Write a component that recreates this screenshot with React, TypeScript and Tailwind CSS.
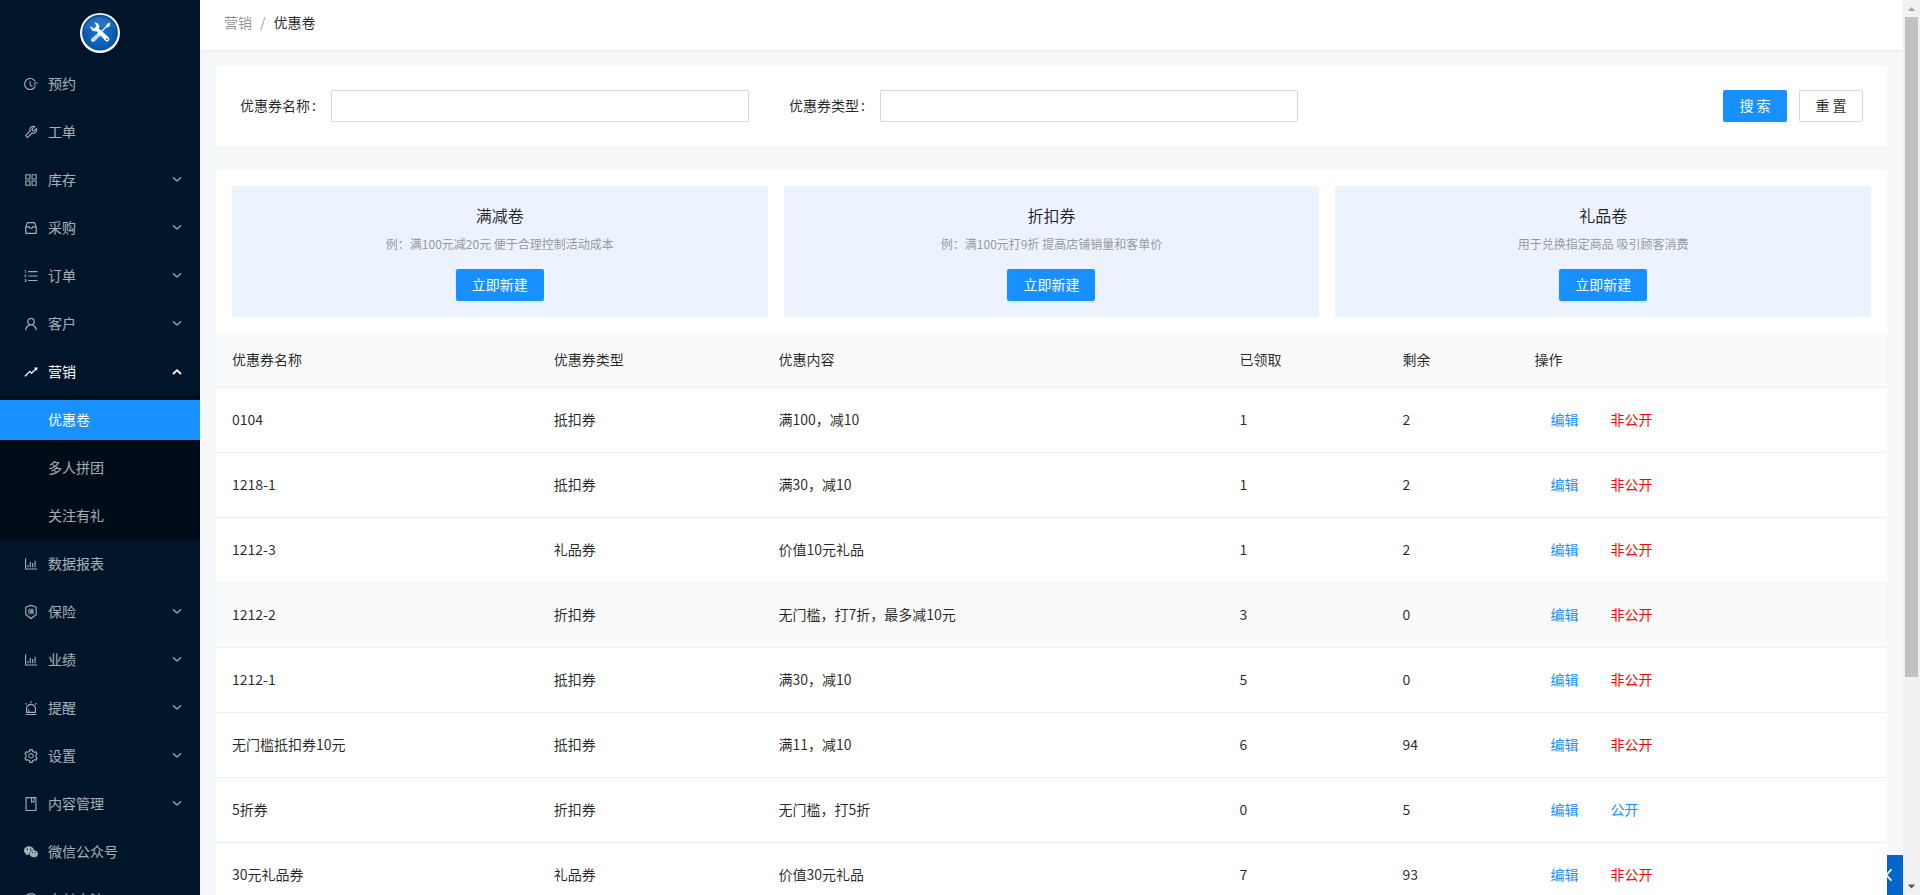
import React from "react";
import type { IconType } from "react-icons";
import {
  AiFillWechat,
  AiOutlineAlert,
  AiOutlineAppstore,
  AiOutlineBarChart,
  AiOutlineBook,
  AiOutlineFieldTime,
  AiOutlineInbox,
  AiOutlineInsurance,
  AiOutlineOrderedList,
  AiOutlinePayCircle,
  AiOutlineRise,
  AiOutlineSetting,
  AiOutlineTool,
  AiOutlineUser,
} from "react-icons/ai";

interface MenuEntry {
  label: string;
  icon: IconType;
  expandable?: boolean;
  children?: string[];
}

const menu: MenuEntry[] = [
  { label: "预约", icon: AiOutlineFieldTime },
  { label: "工单", icon: AiOutlineTool },
  { label: "库存", icon: AiOutlineAppstore, expandable: true },
  { label: "采购", icon: AiOutlineInbox, expandable: true },
  { label: "订单", icon: AiOutlineOrderedList, expandable: true },
  { label: "客户", icon: AiOutlineUser, expandable: true },
  { label: "营销", icon: AiOutlineRise, expandable: true, children: ["优惠卷", "多人拼团", "关注有礼"] },
  { label: "数据报表", icon: AiOutlineBarChart },
  { label: "保险", icon: AiOutlineInsurance, expandable: true },
  { label: "业绩", icon: AiOutlineBarChart, expandable: true },
  { label: "提醒", icon: AiOutlineAlert, expandable: true },
  { label: "设置", icon: AiOutlineSetting, expandable: true },
  { label: "内容管理", icon: AiOutlineBook, expandable: true },
  { label: "微信公众号", icon: AiFillWechat },
  { label: "支付方法", icon: AiOutlinePayCircle },
];

const promos = [
  { title: "满减卷", desc: "例：满100元减20元 便于合理控制活动成本" },
  { title: "折扣券", desc: "例：满100元打9折 提高店铺销量和客单价" },
  { title: "礼品卷", desc: "用于兑换指定商品 吸引顾客消费" },
];

const columns = [
  { title: "优惠券名称", width: "w-[19.25%]" },
  { title: "优惠券类型", width: "w-[13.45%]" },
  { title: "优惠内容", width: "w-[27.6%]" },
  { title: "已领取", width: "w-[9.75%]" },
  { title: "剩余", width: "w-[7.9%]" },
  { title: "操作", width: "" },
];

interface Coupon {
  name: string;
  type: string;
  content: string;
  taken: number;
  left: number;
  open?: boolean;
  active?: boolean;
}

const coupons: Coupon[] = [
  { name: "0104", type: "抵扣券", content: "满100，减10", taken: 1, left: 2 },
  { name: "1218-1", type: "抵扣券", content: "满30，减10", taken: 1, left: 2 },
  { name: "1212-3", type: "礼品券", content: "价值10元礼品", taken: 1, left: 2 },
  { name: "1212-2", type: "折扣券", content: "无门槛，打7折，最多减10元", taken: 3, left: 0, active: true },
  { name: "1212-1", type: "抵扣券", content: "满30，减10", taken: 5, left: 0 },
  { name: "无门槛抵扣券10元", type: "抵扣券", content: "满11，减10", taken: 6, left: 94 },
  { name: "5折券", type: "折扣券", content: "无门槛，打5折", taken: 0, left: 5, open: true },
  { name: "30元礼品券", type: "礼品券", content: "价值30元礼品", taken: 7, left: 93 },
];

const cell = "px-4 pt-[15px] pb-[17px]";

function Logo() {
  return (
    <svg viewBox="0 0 40 40" className="size-10" aria-hidden="true">
      <defs>
        <radialGradient id="disc" cx="50%" cy="50%" r="55%">
          <stop offset="0%" stopColor="#0a78dc" />
          <stop offset="60%" stopColor="#0b62bb" />
          <stop offset="100%" stopColor="#0d4a90" />
        </radialGradient>
      </defs>
      <circle cx="20" cy="20" r="20" fill="#f7f8f9" />
      <circle cx="20" cy="19.6" r="17.9" fill="url(#disc)" />
      <path d="M3.5 17 A17 17 0 0 1 36 15 Q20 11 3.5 17Z" fill="#ffffff" opacity="0.1" />
      <path d="M29.5 10.5 L20 20" stroke="#fff" strokeWidth="1.3" />
      <path d="M30 9.5 L27 11 L26 13.4 L27.4 14.6 L29.6 13.2Z" fill="#fff" />
      <path d="M18.6 19.6 L21 22 L14.4 28.4 Q12.6 29.4 11.4 28.2 Q10.4 27 11.6 25.4Z" fill="#e8f0fa" />
      <path d="M17.6 21.8 L12.6 26.8 M18.8 23 L13.8 27.8" stroke="#5b94cf" strokeWidth="0.6" />
      <path
        d="M14.2 9.4 Q18.4 9.2 19.2 13 Q19.3 14.6 18.9 15.4 L28.8 24.4 Q30 26 29 27.6 Q27.2 29.2 25.6 28 L16.2 18 Q14.2 18.6 12.2 17.4 Q10.2 15.8 10.4 13 L13.2 15.2 L15.6 14.4 L16.2 12Z"
        fill="#fff"
      />
      <circle cx="27" cy="26.2" r="0.9" fill="#0b62bb" />
    </svg>
  );
}

function Chevron({ up = false }: { up?: boolean }) {
  return (
    <svg
      viewBox="0 0 10 10"
      className={up ? "ml-auto size-[10px]" : "ml-auto size-[10px] opacity-85"}
      fill="none"
      stroke="currentColor"
      strokeWidth={up ? 1.8 : 1.5}
      aria-hidden="true"
    >
      <path d={up ? "M1 7 L5 3.2 L9 7" : "M1 2.4 L5 6 L9 2.4"} />
    </svg>
  );
}

function Sidebar() {
  return (
    <aside className="w-[200px] shrink-0 overflow-hidden bg-[#001529] text-white/65">
      <div className="flex h-[60px] items-center justify-center pt-1.5">
        <Logo />
      </div>
      <nav>
        <ul>
          {menu.map(({ label, icon: Icon, expandable, children }) => (
            <li key={label}>
              <button
                type="button"
                className={
                  children
                    ? "flex h-12 w-full items-center gap-[9px] pr-[18px] pl-[23px] text-white"
                    : "flex h-12 w-full items-center gap-[9px] pr-[18px] pl-[23px]"
                }
              >
                <Icon className="size-4" aria-hidden="true" />
                <span className="pb-0.5">{label}</span>
                {expandable && <Chevron up={Boolean(children)} />}
              </button>
              {children && (
                <ul className="bg-[#000c17]">
                  {children.map((child, i) => (
                    <li key={child} className="py-1">
                      <a
                        href="#"
                        className={
                          i === 0
                            ? "flex h-10 items-center bg-[#1890ff] pb-0.5 pl-12 text-white"
                            : "flex h-10 items-center pb-0.5 pl-12"
                        }
                      >
                        {child}
                      </a>
                    </li>
                  ))}
                </ul>
              )}
            </li>
          ))}
        </ul>
      </nav>
    </aside>
  );
}

function Field({ id, label }: { id: string; label: string }) {
  return (
    <div className="flex items-center pr-4">
      <label htmlFor={id} className="w-[91px] shrink-0 pb-0.5">
        {label}
        <span className="ml-0.5">:</span>
      </label>
      <input
        id={id}
        type="text"
        className="h-8 min-w-0 flex-1 rounded-xs border border-[#d9d9d9] bg-white px-3 outline-none"
      />
    </div>
  );
}

function SearchPanel() {
  return (
    <form className="grid grid-cols-3 gap-6 bg-white p-6" onSubmit={(e) => e.preventDefault()}>
      <Field id="coupon-name" label="优惠券名称" />
      <Field id="coupon-type" label="优惠券类型" />
      <div className="flex justify-end gap-3">
        <button
          type="submit"
          className="h-8 w-16 rounded-xs bg-[#1890ff] pb-0.5 text-white shadow-[0_2px_0_rgba(0,0,0,0.045)]"
        >
          搜 索
        </button>
        <button
          type="reset"
          className="h-8 w-16 rounded-xs border border-[#d9d9d9] bg-white pb-0.5 shadow-[0_2px_0_rgba(0,0,0,0.015)]"
        >
          重 置
        </button>
      </div>
    </form>
  );
}

function PromoCards() {
  return (
    <div className="grid grid-cols-3 gap-4 p-4">
      {promos.map((promo) => (
        <section key={promo.title} className="flex flex-col items-center bg-[#ecf3ff] p-4">
          <h2 className="text-base leading-[26px]">{promo.title}</h2>
          <p className="mt-[7px] text-xs leading-[18px] text-[#999]">{promo.desc}</p>
          <button
            type="button"
            className="mt-4 h-8 w-[88px] rounded-xs bg-[#1890ff] pb-0.5 text-white shadow-[0_2px_0_rgba(0,0,0,0.045)]"
          >
            立即新建
          </button>
        </section>
      ))}
    </div>
  );
}

function CouponTable() {
  return (
    <table className="w-full table-fixed text-left">
      <thead className="bg-[#fafafa]">
        <tr className="border-b border-[#f0f0f0]">
          {columns.map((c) => (
            <th key={c.title} scope="col" className={`${c.width} ${cell} font-normal`}>
              {c.title}
            </th>
          ))}
        </tr>
      </thead>
      <tbody>
        {coupons.map((c) => (
          <tr key={c.name} className={c.active ? "border-b border-[#f0f0f0] bg-[#fafafa]" : "border-b border-[#f0f0f0]"}>
            <td className={cell}>{c.name}</td>
            <td className={cell}>{c.type}</td>
            <td className={cell}>{c.content}</td>
            <td className={cell}>{c.taken}</td>
            <td className={cell}>{c.left}</td>
            <td className={cell}>
              <div className="flex">
                <button type="button" className="h-8 px-4 text-[#1890ff]">
                  编辑
                </button>
                <button type="button" className={c.open ? "h-8 px-4 text-[#1890ff]" : "h-8 px-4 text-[#ff0000]"}>
                  {c.open ? "公开" : "非公开"}
                </button>
              </div>
            </td>
          </tr>
        ))}
      </tbody>
    </table>
  );
}

function ScrollRail() {
  return (
    <div className="flex w-[17px] shrink-0 flex-col items-center bg-[#f1f1f1]" aria-hidden="true">
      <svg viewBox="0 0 17 17" className="size-[17px] shrink-0">
        <path d="M5 11 L8.5 7 L12 11Z" fill="#a3a3a3" />
      </svg>
      <div className="w-[13px] grow-[660] basis-0 bg-[#c1c1c1]" />
      <div className="grow-[201] basis-0" />
      <svg viewBox="0 0 17 17" className="size-[17px] shrink-0">
        <path d="M5 6.5 L8.5 10.5 L12 6.5Z" fill="#505050" />
      </svg>
    </div>
  );
}

export default function App() {
  return (
    <div className="flex h-screen overflow-hidden bg-[#f6f8fa] font-['Noto_Sans_CJK_SC',sans-serif] text-sm leading-[22px] text-black/85">
      <Sidebar />
      <div className="relative min-w-0 flex-1 overflow-hidden">
        <header className="h-[50px] bg-white px-6 pt-[11px] shadow-[0_1px_4px_rgba(0,21,41,0.08)]">
          <nav className="flex gap-2 text-black/45">
            <a href="#">营销</a>
            <span>/</span>
            <span className="text-black/85">优惠卷</span>
          </nav>
        </header>
        <main className="flex flex-col gap-6 p-4">
          <SearchPanel />
          <div className="bg-white">
            <PromoCards />
            <CouponTable />
          </div>
        </main>
        <button
          type="button"
          aria-label="展开"
          className="absolute right-0 bottom-0 flex h-10 w-4 items-center bg-[#0066cc] text-white"
        >
          <svg viewBox="0 0 6 14" className="h-[14px] w-[6px]" fill="none" stroke="currentColor" strokeWidth="1.8" aria-hidden="true">
            <path d="M4.4 1.4 L-0.6 7 L4.4 12.6" />
          </svg>
        </button>
      </div>
      <ScrollRail />
    </div>
  );
}
